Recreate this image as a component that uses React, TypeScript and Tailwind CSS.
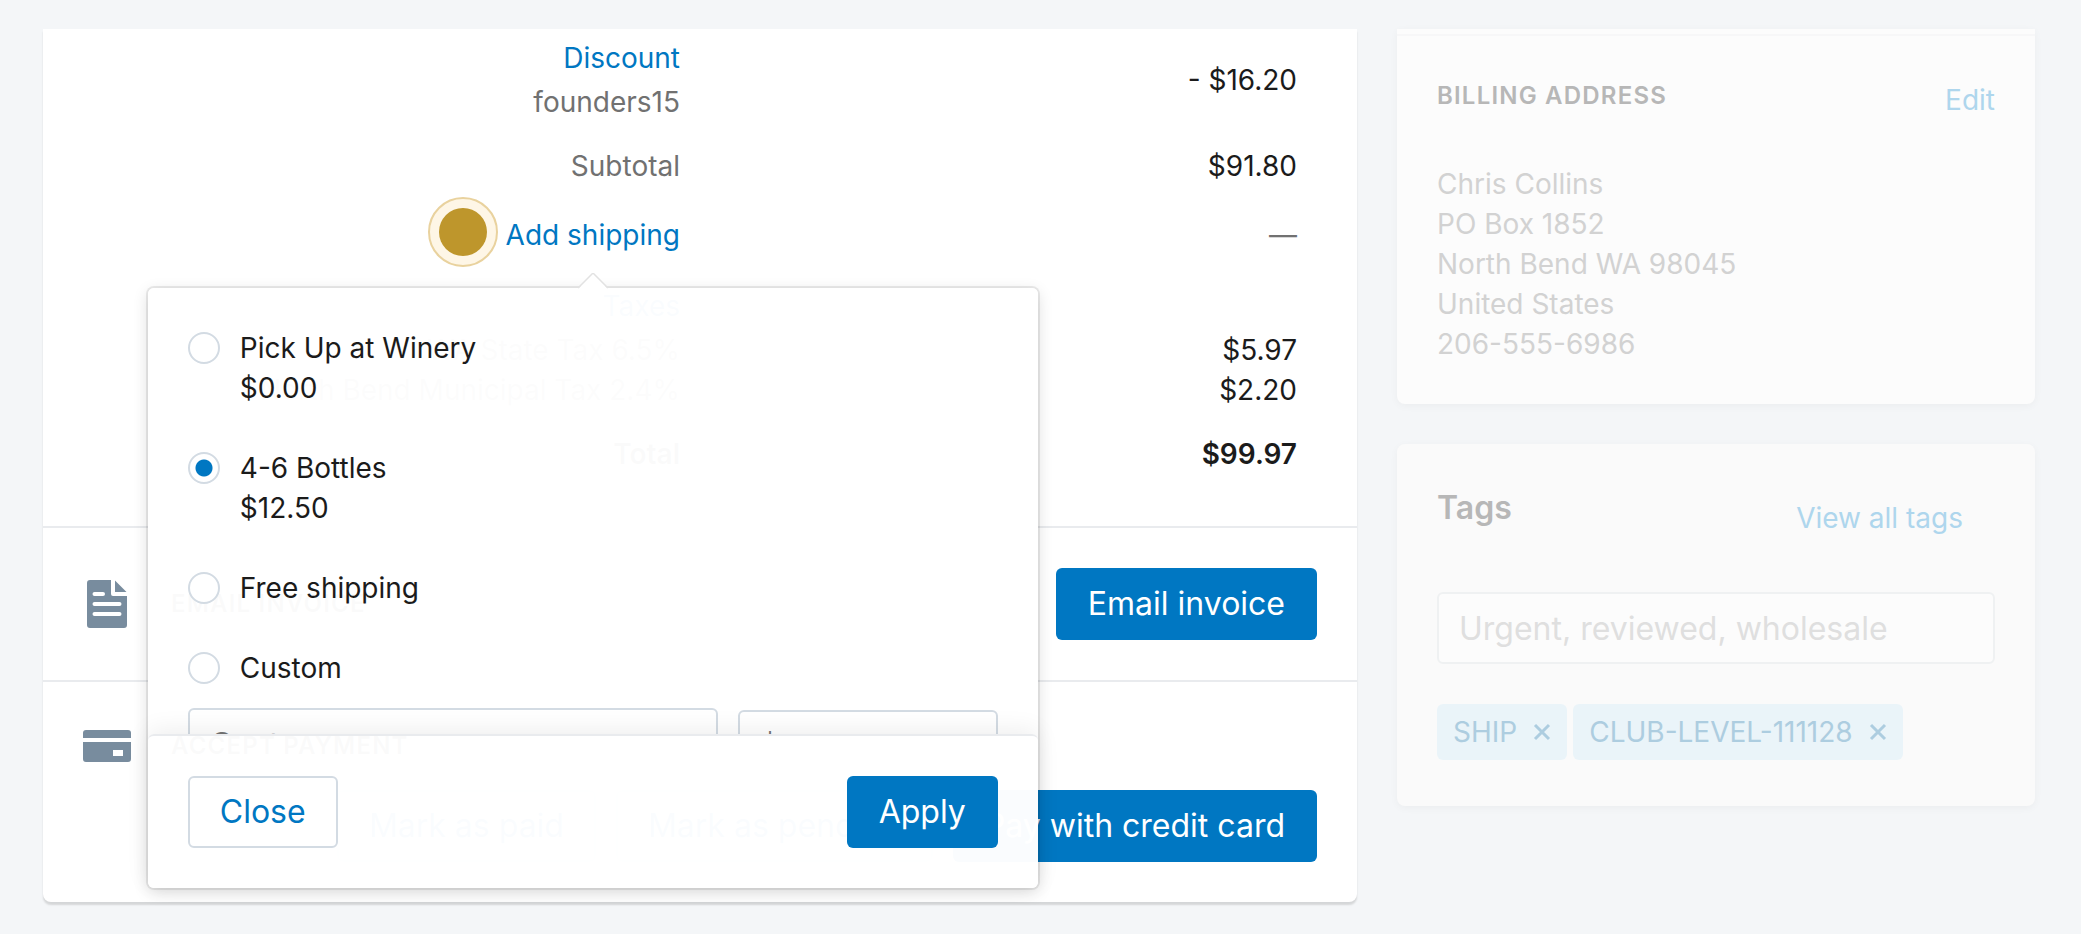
import type { ReactNode } from "react";

const shippingOptions = [
  { id: "pickup", label: "Pick Up at Winery", price: "$0.00" },
  { id: "bottles", label: "4-6 Bottles", price: "$12.50" },
  { id: "free", label: "Free shipping" },
  { id: "custom", label: "Custom" },
];

const tags = ["SHIP", "CLUB-LEVEL-111128"];

function DocumentIcon() {
  return (
    <svg viewBox="0 0 40 48" className="h-12 w-10" fill="#788c9e" aria-hidden="true">
      <path
        fillRule="evenodd"
        d="M3 0h21v14a2 2 0 0 0 2 2h14v29a3 3 0 0 1-3 3H3a3 3 0 0 1-3-3V3a3 3 0 0 1 3-3ZM7.500 12a2 2 0 0 0 0 4h8.500a2 2 0 0 0 0-4ZM7.500 22a2 2 0 0 0 0 4h25a2 2 0 0 0 0-4ZM7.500 32a2 2 0 0 0 0 4h25a2 2 0 0 0 0-4Z"
      />
      <path d="M28 0.500 39.500 12H28Z" />
    </svg>
  );
}

function CardIcon() {
  return (
    <svg viewBox="0 0 48 32" className="h-8 w-12" fill="#788c9e" aria-hidden="true">
      <path d="M3 0h42a3 3 0 0 1 3 3v5H0V3a3 3 0 0 1 3-3Z" />
      <path
        fillRule="evenodd"
        d="M0 12h48v17a3 3 0 0 1-3 3H3a3 3 0 0 1-3-3ZM30 20v6h10v-6Z"
      />
    </svg>
  );
}

function PrimaryButton({ children }: { children: ReactNode }) {
  return (
    <button className="h-18 rounded-md bg-[#0077c2] px-8 text-[32px] text-white">{children}</button>
  );
}

function SecondaryButton({ children }: { children: ReactNode }) {
  return (
    <button className="h-18 rounded-md border-2 border-[#d3dbe3] bg-white px-[30px] text-[32px] text-[#0077c2]">
      {children}
    </button>
  );
}

function ShippingPopover() {
  return (
    <div className="absolute top-[73px] left-1/2 w-[890px] -translate-x-1/2 rounded-md text-left text-[#1b1b1b] shadow-[0_0_0_2px_rgba(0,0,0,0.08),0_4px_16px_rgba(0,0,0,0.14)]">
      <svg
        viewBox="0 0 30 16"
        className="absolute -top-[15px] left-1/2 h-4 w-[30px] -translate-x-1/2"
        aria-hidden="true"
      >
        <path d="M0 16 15 1l15 15Z" fill="#fff" />
        <path d="M0 15 15 0l15 15" fill="none" stroke="#e2e2e2" strokeWidth="1.500" />
      </svg>
      <div className="h-[446px] overflow-hidden rounded-t-md bg-white/98 px-10 pt-10">
        <div className="flex flex-col gap-10">
          {shippingOptions.map((option) => (
            <label key={option.id} className="flex gap-5">
              <input
                type="radio"
                name="shipping"
                defaultChecked={option.id === "bottles"}
                className="mt-1 size-8 shrink-0 appearance-none rounded-full border-2 border-[#d3dbe3] bg-white checked:bg-[radial-gradient(circle,#0077c2_8px,#fff_9px)]"
              />
              <span>
                {option.label}
                {option.price && <span className="block">{option.price}</span>}
              </span>
            </label>
          ))}
        </div>
        <div className="mt-5 flex items-start gap-5">
          <input
            type="text"
            aria-label="Custom shipping name"
            placeholder="Custom"
            className="h-18 min-w-0 flex-1 rounded-md border-2 border-[#d3dbe3] bg-white px-5 text-[32px] placeholder:text-[#757575]"
          />
          <input
            type="text"
            aria-label="Custom shipping price"
            placeholder="$0.00"
            className="mt-0.5 h-18 w-[260px] rounded-md border-2 border-[#d3dbe3] bg-white px-5 text-[32px] placeholder:text-[#757575]"
          />
        </div>
      </div>
      <div className="relative flex justify-between rounded-md border-t-2 border-[#e9ebee] bg-white/98 px-10 py-10 shadow-[0_-4px_24px_rgba(0,0,0,0.07)]">
        <SecondaryButton>Close</SecondaryButton>
        <PrimaryButton>Apply</PrimaryButton>
      </div>
    </div>
  );
}

function OrderTotals() {
  return (
    <div className="px-10 pb-10">
      <table className="w-full table-fixed text-right">
        <tbody>
          <tr>
            <td className="px-5 pt-[9px] pb-3 text-[#717171]">
              <a href="#discount" className="mb-1 block text-[#0077c2]">
                Discount
              </a>
              founders15
            </td>
            <td className="px-5 pt-[9px] pb-3">- $16.20</td>
          </tr>
          <tr>
            <td className="px-5 py-3 text-[#717171]">Subtotal</td>
            <td className="px-5 py-3">$91.80</td>
          </tr>
          <tr>
            <td className="px-5 pt-[17px] pb-[19px]">
              <div className="relative z-10 inline-block align-top">
                <span className="absolute -top-[18px] right-full mr-2 flex size-[70px] items-center justify-center rounded-full border-2 border-[#e9d29e] bg-[#fef6e6]">
                  <span className="size-12 rounded-full bg-[#be962c]" />
                </span>
                <a href="#shipping" className="block text-[#0077c2]">
                  Add shipping
                </a>
                <ShippingPopover />
              </div>
            </td>
            <td className="px-5 pt-[17px] pb-[19px] text-[#717171]">—</td>
          </tr>
          <tr>
            <td className="px-5 py-3 text-[#717171]">
              <a href="#taxes" className="mb-1 block text-[#0077c2]">
                Taxes
              </a>
              WA State Tax 6.5%
              <br />
              North Bend Municipal Tax 2.4%
            </td>
            <td className="px-5 py-3 align-bottom">
              $5.97
              <br />
              $2.20
            </td>
          </tr>
          <tr className="font-semibold">
            <td className="px-5 py-3">Total</td>
            <td className="px-5 py-3">$99.97</td>
          </tr>
        </tbody>
      </table>
    </div>
  );
}

function OrderCard() {
  return (
    <main className="self-start rounded-b-lg bg-white shadow-[0_3px_2px_rgba(0,0,0,0.13)]">
      <OrderTotals />
      <section className="flex items-center border-t-2 border-[#e9ebee] p-10">
        <div className="flex w-12 justify-center">
          <DocumentIcon />
        </div>
        <h2 className="ml-10 flex-1 text-2xl font-semibold tracking-wider">EMAIL INVOICE</h2>
        <PrimaryButton>Email invoice</PrimaryButton>
      </section>
      <section className="border-t-2 border-[#e9ebee] p-10">
        <div className="flex h-12 items-center gap-10">
          <CardIcon />
          <h2 className="text-2xl font-semibold tracking-wider">ACCEPT PAYMENT</h2>
        </div>
        <div className="mt-5 flex justify-end gap-5">
          <SecondaryButton>Mark as paid</SecondaryButton>
          <SecondaryButton>Mark as pending</SecondaryButton>
          <PrimaryButton>Pay with credit card</PrimaryButton>
        </div>
      </section>
    </main>
  );
}

function BillingAddress() {
  return (
    <section className="rounded-b-lg bg-[#fcfcfc] pt-[5px] shadow-[0_2px_8px_rgba(0,0,0,0.04)]">
      <div className="border-t-2 border-[#f7f7f8] p-10">
        <div className="flex h-12 items-start justify-between">
          <h2 className="text-2xl leading-10 font-semibold tracking-wider text-[#b7b7b7]">
            BILLING ADDRESS
          </h2>
          <a href="#edit" className="leading-12 text-[#aed6ed]">
            Edit
          </a>
        </div>
        <address className="mt-10 text-[#d2d2d2] not-italic">
          Chris Collins
          <br />
          PO Box 1852
          <br />
          North Bend WA 98045
          <br />
          United States
          <br />
          206-555-6986
        </address>
      </div>
    </section>
  );
}

function Tags() {
  return (
    <section className="rounded-lg bg-[#fafafa] px-10 pt-10 pb-[46px] shadow-[0_2px_8px_rgba(0,0,0,0.04)]">
      <div className="flex items-start justify-between">
        <h2 className="text-[32px] leading-12 font-semibold text-[#b7b7b7]">Tags</h2>
        <a href="#tags" className="px-8 py-3.5 text-[#aed6ed]">
          View all tags
        </a>
      </div>
      <input
        type="text"
        aria-label="Add tags"
        placeholder="Urgent, reviewed, wholesale"
        className="mt-10 h-18 w-full rounded-md border-2 border-[#eff1f2] bg-[#fcfcfc] px-5 text-[32px] placeholder:text-[#dfdfdf]"
      />
      <ul className="mt-10 flex flex-wrap gap-1.5 text-[#adcde0]">
        {tags.map((tag) => (
          <li key={tag} className="flex h-14 items-center gap-4 rounded-md bg-[#eaf4f9] px-4">
            {tag}
            <button aria-label={`Remove ${tag}`}>
              <svg viewBox="0 0 18 18" className="size-[18px]" aria-hidden="true">
                <path d="M2 2l14 14M16 2 2 16" stroke="currentColor" strokeWidth="3" />
              </svg>
            </button>
          </li>
        ))}
      </ul>
    </section>
  );
}

export default function App() {
  return (
    <div className="min-h-screen bg-[#f4f6f8] pt-[29px] pr-[46px] pb-[31px] pl-[43px] font-['Inter',sans-serif] text-[28px] leading-10 text-[#1b1b1b]">
      <div className="grid grid-cols-[1314fr_638fr] gap-10">
        <OrderCard />
        <aside className="flex flex-col gap-10">
          <BillingAddress />
          <Tags />
        </aside>
      </div>
    </div>
  );
}
